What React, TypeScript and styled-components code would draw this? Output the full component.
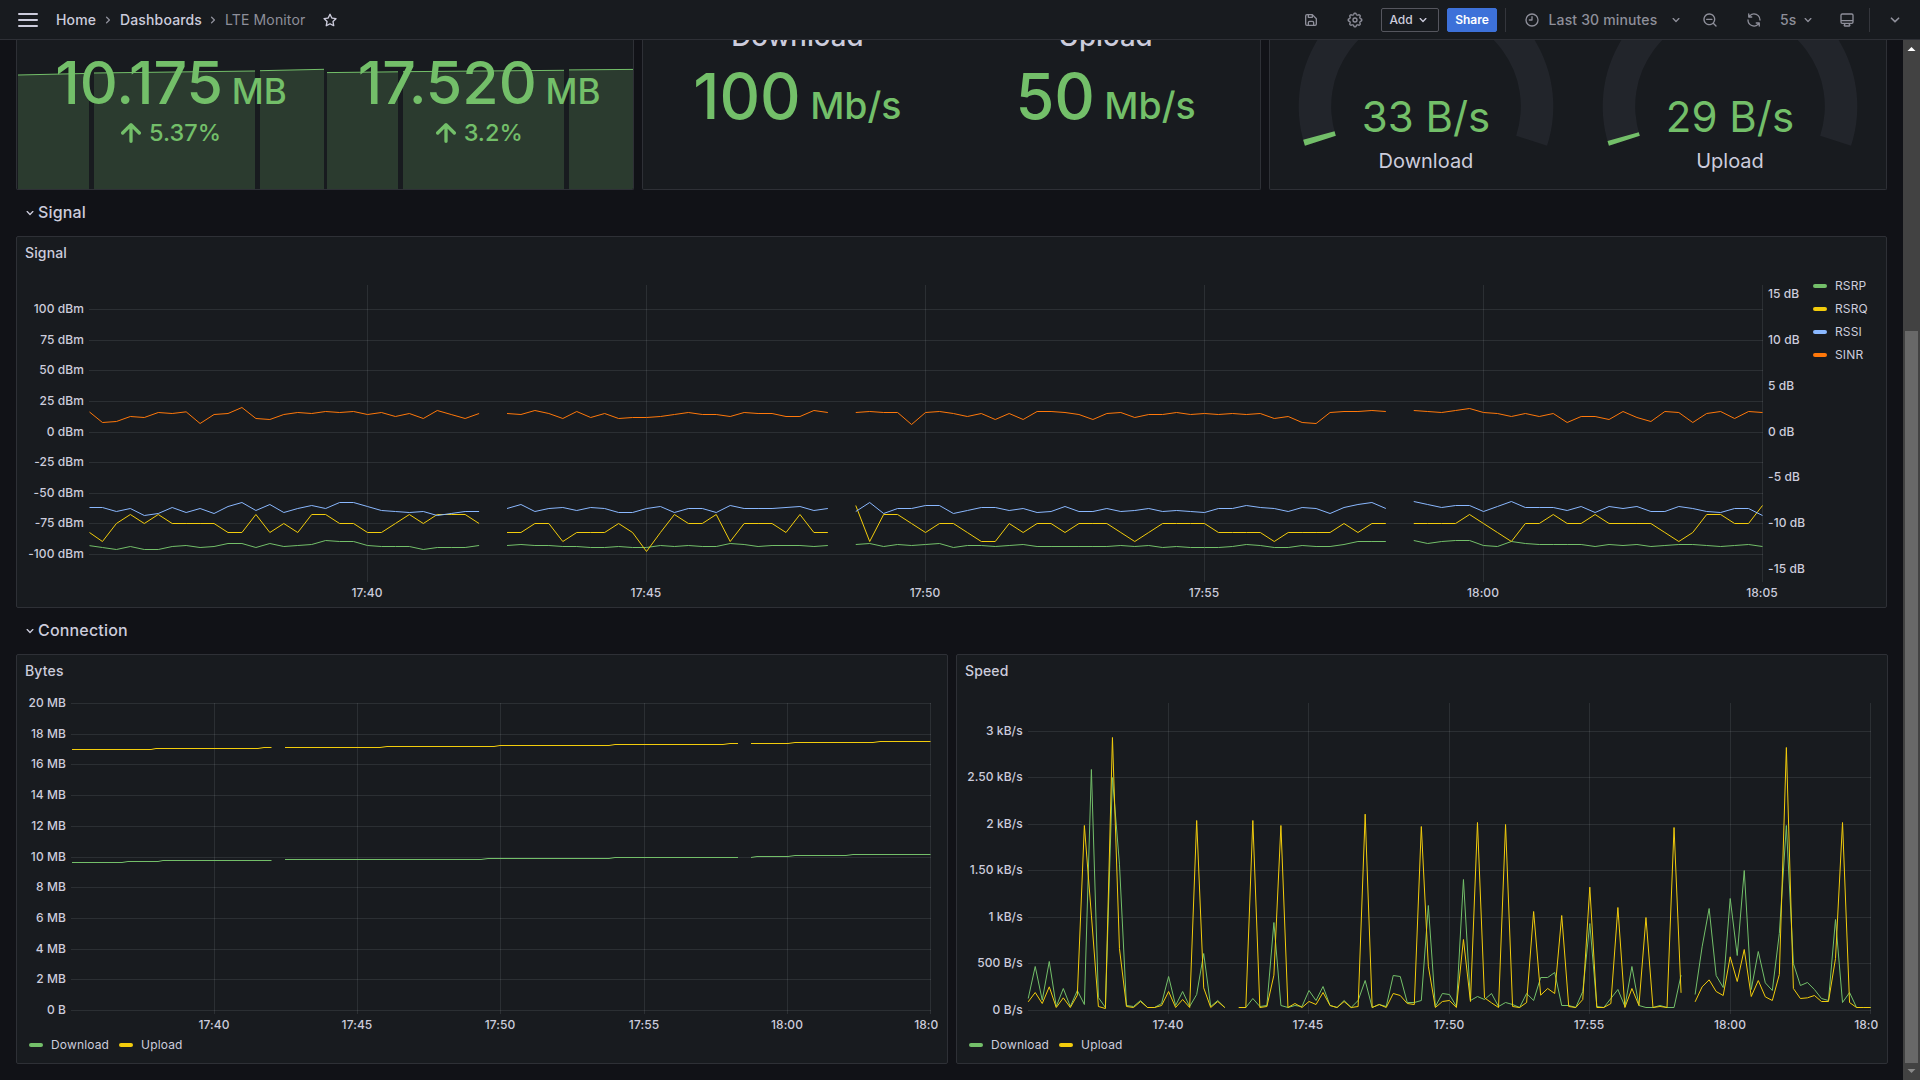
import React from 'react';
import styled, { createGlobalStyle } from 'styled-components';

const color = {
  canvas: '#111217',
  panel: '#181b1f',
  border: '#2e3036',
  text: '#ccccdc',
  muted: '#8e8f9a',
  green: '#73bf69',
  yellow: '#f2cc0c',
  blue: '#8ab8ff',
  orange: '#ff780a',
  grid: 'rgba(240, 250, 255, 0.09)',
};

const GlobalStyle = createGlobalStyle`
  * { box-sizing: border-box; }
  body {
    margin: 0;
    background: ${color.canvas};
    color: ${color.text};
    font-family: Inter, 'Liberation Sans', sans-serif;
    font-size: 14px;
    overflow: hidden;
  }
  svg { display: block; flex: none; }
`;

/* ---------- icons ---------- */

const icons = {
  down: 'M17,9.17a1,1,0,0,0-1.41,0L12,12.71,8.46,9.17a1,1,0,0,0-1.41,0,1,1,0,0,0,0,1.42l4.24,4.24a1,1,0,0,0,1.42,0L17,10.59A1,1,0,0,0,17,9.17Z',
  right: 'M14.83,11.29,10.59,7.05a1,1,0,0,0-1.42,0,1,1,0,0,0,0,1.41L12.71,12,9.17,15.54a1,1,0,0,0,0,1.41,1,1,0,0,0,.71.29,1,1,0,0,0,.71-.29l4.24-4.24A1,1,0,0,0,14.83,11.29Z',
  star: 'M22,9.67A1,1,0,0,0,21.14,9l-5.69-.83L12.9,3a1,1,0,0,0-1.8,0L8.55,8.16,2.86,9a1,1,0,0,0-.81.68,1,1,0,0,0,.25,1l4.13,4-1,5.68A1,1,0,0,0,6.9,21.44L12,18.77l5.1,2.67a.93.93,0,0,0,.46.12,1,1,0,0,0,.59-.19,1,1,0,0,0,.4-1l-1-5.68,4.13-4A1,1,0,0,0,22,9.67Zm-6.15,4a1,1,0,0,0-.29.88l.72,4.2-3.76-2a1.06,1.06,0,0,0-.94,0l-3.76,2,.72-4.2a1,1,0,0,0-.29-.88l-3-3,4.21-.61a1,1,0,0,0,.76-.55L12,5.7l1.88,3.82a1,1,0,0,0,.76.55l4.21.61Z',
  save: 'M20.71,9.29l-6-6a1,1,0,0,0-.32-.21A1.09,1.09,0,0,0,14,3H6A3,3,0,0,0,3,6V18a3,3,0,0,0,3,3H18a3,3,0,0,0,3-3V10A1,1,0,0,0,20.71,9.29ZM9,5h4V7H9Zm6,14H9V16a1,1,0,0,1,1-1h4a1,1,0,0,1,1,1Zm4-1a1,1,0,0,1-1,1H17V16a3,3,0,0,0-3-3H10a3,3,0,0,0-3,3v3H6a1,1,0,0,1-1-1V6A1,1,0,0,1,6,5H7V8A1,1,0,0,0,8,9h6a1,1,0,0,0,1-1V6.41l4,4Z',
  clock: 'M12,2A10,10,0,1,0,22,12,10,10,0,0,0,12,2Zm0,18a8,8,0,1,1,8-8A8,8,0,0,1,12,20ZM12,6a1,1,0,0,0-1,1v4H8a1,1,0,0,0,0,2h4a1,1,0,0,0,1-1V7A1,1,0,0,0,12,6Z',
  zoomOut: 'M21.71,20.29,18,16.61A9,9,0,1,0,16.61,18l3.68,3.68a1,1,0,0,0,1.42,0A1,1,0,0,0,21.71,20.29ZM11,18a7,7,0,1,1,7-7A7,7,0,0,1,11,18Zm4-8H7a1,1,0,0,0,0,2h8a1,1,0,0,0,0-2Z',
  sync: 'M19.91,15.51H15.38a1,1,0,0,0,0,2h2.4A8,8,0,0,1,4,12a1,1,0,0,0-2,0,10,10,0,0,0,16.88,7.23V21a1,1,0,0,0,2,0V16.5A1,1,0,0,0,19.91,15.51ZM12,2A10,10,0,0,0,5.12,4.77V3a1,1,0,0,0-2,0V7.5a1,1,0,0,0,1,1h4.5a1,1,0,0,0,0-2H6.22A8,8,0,0,1,20,12a1,1,0,0,0,2,0A10,10,0,0,0,12,2Z',
  monitor: 'M19,2H5A3,3,0,0,0,2,5V15a3,3,0,0,0,3,3H7.64l-.58,1a2,2,0,0,0,0,2,2,2,0,0,0,1.75,1h6.46A2,2,0,0,0,17,21a2,2,0,0,0,0-2l-.59-1H19a3,3,0,0,0,3-3V5A3,3,0,0,0,19,2ZM8.77,20,10,18H14l1.2,2ZM20,15a1,1,0,0,1-1,1H5a1,1,0,0,1-1-1V14H20Zm0-3H4V5A1,1,0,0,1,5,4H19a1,1,0,0,1,1,1Z',
};

function Icon({ name, size = 16 }: { name: keyof typeof icons; size?: number }) {
  return (
    <svg width={size} height={size} viewBox="0 0 24 24" fill="currentColor">
      <path d={icons[name]} />
    </svg>
  );
}

/* Eight-lobed gear outline, generated around the centre. */
const gearPath = (() => {
  const pts: string[] = [];
  for (let a = 0; a <= 360; a += 3) {
    const t = (a * Math.PI) / 180;
    const wave = Math.cos(8 * t);
    const r = 9.1 + 1.15 * Math.sign(wave) * Math.pow(Math.abs(wave), 0.55);
    pts.push(`${(12 + r * Math.cos(t)).toFixed(2)},${(12 + r * Math.sin(t)).toFixed(2)}`);
  }
  return `M${pts.join('L')}Z`;
})();

function GearIcon() {
  return (
    <svg width="16" height="16" viewBox="0 0 24 24" fill="none" stroke="currentColor" strokeWidth="2">
      <path d={gearPath} strokeLinejoin="round" />
      <circle cx="12" cy="12" r="3" />
    </svg>
  );
}

/* ---------- header ---------- */

const Header = styled.header`
  height: 40px;
  display: flex;
  align-items: center;
  justify-content: space-between;
  padding: 0 15px 0 18px;
  background: ${color.panel};
  border-bottom: 1px solid ${color.border};
`;

const Group = styled.div`
  display: flex;
  align-items: center;
`;

const MenuButton = styled.div`
  width: 20px;
  height: 14px;
  margin-right: 18px;
  display: flex;
  flex-direction: column;
  justify-content: space-between;
  span {
    height: 2px;
    background: ${color.text};
    border-radius: 1px;
  }
`;

const Crumb = styled.span<{ $w: number; $muted?: boolean }>`
  width: ${(p) => p.$w}px;
  white-space: nowrap;
  font-weight: ${(p) => (p.$muted ? 400 : 500)};
  letter-spacing: 0.01071em;
  color: ${(p) => (p.$muted ? color.muted : color.text)};
`;

const CrumbArrow = styled.div`
  margin-right: 4px;
  color: ${color.muted};
`;

const Slot = styled.div<{ $ml?: number; $bright?: boolean }>`
  margin-left: ${(p) => p.$ml ?? 0}px;
  color: ${(p) => (p.$bright ? color.text : color.muted)};
`;

const ToolText = styled.span<{ $ml: number; $w: number }>`
  margin-left: ${(p) => p.$ml}px;
  width: ${(p) => p.$w}px;
  white-space: nowrap;
  font-weight: 500;
  letter-spacing: 0.01071em;
  color: ${color.muted};
`;

const Button = styled.div<{ $primary?: boolean; $w: number; $ml: number }>`
  width: ${(p) => p.$w}px;
  height: 24px;
  margin-left: ${(p) => p.$ml}px;
  display: flex;
  align-items: center;
  justify-content: center;
  gap: 2px;
  border-radius: 2px;
  font-size: 12px;
  font-weight: ${(p) => (p.$primary ? 600 : 500)};
  color: ${(p) => (p.$primary ? '#fff' : color.text)};
  background: ${(p) => (p.$primary ? '#3d71d9' : 'transparent')};
  border: 1px solid ${(p) => (p.$primary ? '#3d71d9' : '#55565e')};
`;

const Divider = styled.div<{ $ml: number }>`
  width: 1px;
  height: 24px;
  margin-left: ${(p) => p.$ml}px;
  background: #34363c;
`;

/* ---------- page ---------- */

const Page = styled.div`
  width: 1920px;
  height: 1080px;
  display: flex;
  flex-direction: column;
  overflow: hidden;
`;

const Body = styled.div`
  flex: 1;
  min-height: 0;
  display: flex;
`;

const Content = styled.main`
  flex: 1;
  min-width: 0;
  padding: 0 16px;
  overflow: hidden;
`;

const StatRow = styled.section`
  height: 150px;
  display: grid;
  grid-template-columns: repeat(3, 1fr);
  column-gap: 8px;
`;

const ConnectionRow = styled.section`
  display: grid;
  grid-template-columns: 932px 932px;
  column-gap: 8px;
  height: 410px;
`;

const Panel = styled.section<{ $h?: number; $cut?: boolean }>`
  position: relative;
  height: ${(p) => (p.$h ? `${p.$h}px` : '100%')};
  background: ${color.panel};
  border: 1px solid ${color.border};
  border-radius: 2px;
  overflow: hidden;
  ${(p) => p.$cut && 'border-top: 0; border-top-left-radius: 0; border-top-right-radius: 0;'}
`;

const PanelTitle = styled.h2`
  margin: 0;
  height: 33px;
  padding: 0 8px;
  line-height: 32px;
  font-size: 14px;
  font-weight: 500;
  letter-spacing: 0.01071em;
`;

const RowTitle = styled.h1`
  margin: 0;
  height: 46px;
  padding: 0 0 3px 6px;
  display: flex;
  align-items: center;
  font-size: 16px;
  font-weight: 500;
  letter-spacing: 0.01071em;
  svg {
    margin-top: 3px;
  }
`;

/* ---------- stat panels ---------- */

const Backdrop = styled.svg`
  position: absolute;
  inset: 0;
`;

const Stats = styled.div`
  position: relative;
  display: grid;
  grid-template-columns: 1fr 1fr;
  height: 100%;
`;

const Stat = styled.div`
  display: flex;
  flex-direction: column;
  align-items: center;
  color: ${color.green};
  font-weight: 500;
  white-space: nowrap;
`;

const StatLabel = styled.div`
  margin: -21px 0 11px;
  font-size: 27.6px;
  line-height: 34px;
  color: ${color.text};
`;

const StatValue = styled.div<{ $size: number; $mt?: number }>`
  margin-top: ${(p) => p.$mt ?? 0}px;
  height: ${(p) => p.$size + 1}px;
  line-height: ${(p) => p.$size + 1}px;
  font-size: ${(p) => p.$size}px;
  small {
    font-size: 0.595em;
    margin-left: 0.25em;
  }
`;

const Change = styled.div`
  margin-top: 5px;
  display: flex;
  align-items: center;
  gap: 8px;
  font-size: 23.5px;
  line-height: 30px;
`;

function ArrowUp() {
  return (
    <svg width="20" height="20" viewBox="6 6 12 12" fill="currentColor">
      <path d="M17.71,11.29l-5-5a1,1,0,0,0-.33-.21,1,1,0,0,0-.76,0,1,1,0,0,0-.33.21l-5,5a1,1,0,0,0,1.42,1.42L11,9.41V17a1,1,0,0,0,2,0V9.41l3.29,3.3a1,1,0,0,0,1.42,0A1,1,0,0,0,17.71,11.29Z" />
    </svg>
  );
}

/* [left, right, y at left, y at right] for every uninterrupted stretch */
const sparks: [number, number, number, number][] = [
  [18, 89, 75, 73.4],
  [94, 255, 73, 71],
  [260, 324, 70.7, 69.3],
  [327, 398, 72.6, 71.8],
  [403, 564, 71.7, 70.3],
  [569, 633, 69.9, 69.4],
];

function Sparklines() {
  return (
    <Backdrop width="616" height="149" viewBox="17 40 616 149">
      {sparks.map(([l, r, a, b]) => (
        <g key={l}>
          <polygon points={`${l},${a} ${r},${b} ${r},189 ${l},189`} fill="#2b3b2f" />
          <line x1={l} y1={a} x2={r} y2={b} stroke={color.green} strokeWidth="1" />
        </g>
      ))}
    </Backdrop>
  );
}

/* ---------- gauges ---------- */

function sector(cx: number, cy: number, r1: number, r2: number, from: number, to: number) {
  const at = (r: number, deg: number) => {
    const t = (deg * Math.PI) / 180;
    return `${(cx - r * Math.cos(t)).toFixed(2)},${(cy - r * Math.sin(t)).toFixed(2)}`;
  };
  const large = to - from > 180 ? 1 : 0;
  return `M${at(r2, from)}A${r2},${r2},0,${large},1,${at(r2, to)}L${at(r1, to)}A${r1},${r1},0,${large},0,${at(r1, from)}Z`;
}

function Gauge({ cx, fill, value, label }: { cx: number; fill: number; value: string; label: string }) {
  return (
    <g textAnchor="middle">
      <path d={sector(cx, 106.4, 94.8, 127.3, -18, 198)} fill="#22252b" />
      <path d={sector(cx, 106.4, 94.8, 127.3, -18, -18 + fill)} fill={color.green} />
      <text x={cx} y="132" fontSize="42" fill={color.green}>{value}</text>
      <text x={cx} y="168" fontSize="20" fill={color.text}>{label}</text>
    </g>
  );
}

/* ---------- charts ---------- */

type Sample = number | null;
type Series = { stroke: string; values: Sample[] };

const _ = null;

/* Samples every 15 s; heights are stored in thirds of a pixel below `base`. */
const signal: Series[] = [
  {
    stroke: color.green,
    values: [946,952,958,949,958,958,949,946,952,949,940,940,952,940,949,946,943,931,934,934,946,949,949,949,958,952,952,952,946,_,
      946,943,946,946,949,949,952,952,949,952,952,946,949,946,949,949,940,943,949,946,946,946,949,946,_,
      943,940,949,943,946,943,940,952,946,946,949,946,943,949,949,949,949,949,949,946,949,946,952,949,952,952,952,949,943,946,952,952,946,949,949,943,934,934,934,_,
      931,940,934,931,931,946,949,934,940,943,943,943,943,949,943,946,943,949,946,943,943,946,949,946,943,949],
  },
  {
    stroke: color.yellow,
    values: [905,934,880,853,880,853,880,880,880,880,907,907,853,907,880,907,853,853,880,880,907,907,880,853,880,853,853,853,880,_,
      907,907,880,880,934,907,907,907,880,907,964,907,853,880,880,853,934,880,880,880,907,853,907,907,_,
      826,934,853,853,880,907,880,880,907,934,934,880,907,880,880,907,880,880,880,907,934,907,880,880,880,880,907,907,907,907,934,907,907,907,907,880,907,880,880,_,
      880,880,880,880,853,880,907,934,880,880,853,880,880,853,880,880,880,880,907,934,907,853,853,880,880,826],
  },
  {
    stroke: color.blue,
    values: [832,832,844,835,856,850,832,847,835,850,829,817,841,823,847,835,826,835,817,817,829,841,844,847,844,856,850,844,844,_,
      835,823,844,835,832,841,832,835,847,847,835,829,847,835,835,847,826,835,835,835,832,829,841,835,_,
      844,817,850,835,835,826,826,850,841,832,832,841,835,847,844,829,844,844,835,844,841,835,844,841,844,847,835,835,826,832,835,844,832,835,850,832,823,817,835,_,
      814,823,832,826,826,844,829,814,832,832,832,841,829,847,829,835,829,844,844,829,835,844,847,835,835,856],
  },
  {
    stroke: color.orange,
    values: [543,577,574,559,562,547,550,545,580,553,550,532,565,568,553,547,550,544,547,544,553,547,559,550,565,541,553,565,550,_,
      550,553,541,550,565,544,562,550,565,562,562,559,553,547,553,553,559,547,550,550,559,559,541,547,_,
      547,544,547,547,583,547,544,550,559,550,568,550,568,544,544,547,553,568,550,547,562,553,553,547,553,550,553,550,553,550,565,559,577,580,547,544,544,541,544,_,
      541,544,547,541,535,547,550,559,550,559,550,577,559,559,568,544,562,574,544,547,577,550,544,565,544,547],
  },
];

const speed: Series[] = [
  {
    stroke: color.green,
    values: [1075,979,1080,964,1099,1045,1099,1051,1093,388,1072,1102,412,672,1096,1099,1081,1102,1102,1090,1009,1096,1054,1099,1063,940,1099,1081,1102,_,
      1102,1102,1075,1099,1096,847,1096,1102,1096,1099,1051,1081,1039,1096,1102,1081,1102,1081,1021,1102,1093,1099,1006,1009,1087,1087,1081,796,1099,1060,1063,1099,718,1081,1069,1078,1060,1099,1087,1093,1102,1060,1081,1012,1012,997,1096,1096,1102,1054,850,1099,1102,1075,1048,1099,979,1096,1102,1102,1096,1102,1102,1005,_,
      1063,920,805,1006,1042,775,946,691,1048,934,1028,1051,880,556,970,1036,1027,1048,1075,1081,838,1087,1057,1102,1102,1102],
  },
  {
    stroke: color.yellow,
    values: [1085,1057,1090,1040,1102,1073,1102,1065,556,825,1099,1105,292,925,1099,1102,1084,1102,1102,1096,1054,1102,1078,1102,541,1043,1102,1084,1102,_,
      1102,1102,541,1102,1099,1005,556,1102,1090,1102,1084,1093,1057,1096,1102,1084,1102,1099,522,1102,1093,1102,1060,1066,1090,1093,559,978,1102,1084,1081,1102,898,1084,547,1073,1088,1102,553,1099,1102,1087,814,1065,1045,1060,826,1099,1102,1078,741,1102,1102,1090,802,1102,1045,1096,832,1102,1099,1102,562,1058,_,
      1085,1040,1019,1054,1066,950,1024,928,1069,1021,1070,1081,1003,322,1045,1075,1073,1066,1084,1084,955,547,1087,1102,1102,1102],
  },
];

const bytes = [
  { stroke: color.green, runs: [
    '72,862.5 122,862.5 128,861.5 158,861.5 163,860.5 271.5,860.5',
    '285,859.5 481,859.5 488,858.5 609,858.5 615,857.5 738,857.5',
    '751,857.5 757,856.5 788,856.5 795,855.5 846,855.5 853,854.5 930.5,854.5',
  ] },
  { stroke: color.yellow, runs: [
    '72,749.5 151,749.5 156,748.5 258,748.5 264,747.5 271.5,747.5',
    '285,747.5 380,747.5 387,746.5 494,746.5 500,745.5 609,745.5 615,744.5 723,744.5 730,743.5 738,743.5',
    '751,743.5 788,743.5 795,742.5 873,742.5 880,741.5 930.5,741.5',
  ] },
];

function trace(values: Sample[], x0: number, step: number, base: number) {
  let d = '';
  let pen = false;
  values.forEach((v, i) => {
    if (v === null) {
      pen = false;
      return;
    }
    d += `${pen ? 'L' : 'M'}${(x0 + i * step).toFixed(2)},${(base + v / 3 + 0.17).toFixed(2)}`;
    pen = true;
  });
  return d;
}

const AxisText = styled.text`
  font-size: 12px;
  font-weight: 450;
  letter-spacing: 0.08px;
  fill: ${color.text};
`;

type Tick = [number, string];

type GridProps = {
  left: number;
  right: number;
  top: number;
  bottom: number;
  labelX: number;
  timeY: number;
  ys: Tick[];
  xs: Tick[];
};

function Grid({ left, right, top, bottom, labelX, timeY, ys, xs }: GridProps) {
  return (
    <g>
      {ys.map(([y, label]) => (
        <g key={label}>
          <rect x={left} y={y} width={right - left} height="1" fill={color.grid} />
          <AxisText x={labelX} y={y + 4} textAnchor="end">{label}</AxisText>
        </g>
      ))}
      {xs.map(([x, label]) => (
        <g key={label}>
          <rect x={x} y={top} width="1" height={bottom - top} fill={color.grid} />
          <AxisText x={x} y={timeY} textAnchor="middle">{label}</AxisText>
        </g>
      ))}
    </g>
  );
}

const ChartRow = styled.div`
  display: flex;
`;

const Legend = styled.div<{ $vertical?: boolean }>`
  display: flex;
  flex-direction: ${(p) => (p.$vertical ? 'column' : 'row')};
  padding: ${(p) => (p.$vertical ? '4px 0 0 6px' : '0 0 0 12px')};
  gap: ${(p) => (p.$vertical ? '0' : '10px')};
`;

const LegendItem = styled.div<{ $h: number }>`
  display: flex;
  align-items: center;
  gap: 8px;
  height: ${(p) => p.$h}px;
  font-size: 12px;
  letter-spacing: 0.0125em;
`;

const Swatch = styled.i<{ $c: string }>`
  width: 14px;
  height: 4px;
  margin-top: 1px;
  border-radius: 2px;
  background: ${(p) => p.$c};
`;

function SignalChart() {
  return (
    <svg width="1790" height="337" viewBox="17 270 1790 337">
      <clipPath id="signal-plot"><rect x="89.5" y="280" width="1673.5" height="310" /></clipPath>
      <Grid
        left={89} right={1763} top={285} bottom={582} labelX={84} timeY={597}
        ys={[[309, '100 dBm'], [340, '75 dBm'], [370, '50 dBm'], [401, '25 dBm'], [432, '0 dBm'], [462, '-25 dBm'], [493, '-50 dBm'], [523, '-75 dBm'], [554, '-100 dBm']]}
        xs={[[367, '17:40'], [646, '17:45'], [925, '17:50'], [1204, '17:55'], [1483, '18:00'], [1762, '18:05']]}
      />
      {([[298, '15 dB'], [344, '10 dB'], [390, '5 dB'], [436, '0 dB'], [481, '-5 dB'], [527, '-10 dB'], [573, '-15 dB']] as Tick[]).map(([y, t]) => (
        <AxisText key={t} x="1768" y={y}>{t}</AxisText>
      ))}
      <g clipPath="url(#signal-plot)" fill="none" strokeWidth="1">
        {signal.map((s) => (
          <path key={s.stroke} d={trace(s.values, 88.5, 13.95, 230)} stroke={s.stroke} />
        ))}
      </g>
    </svg>
  );
}

function BytesChart() {
  const ys = [1010, 979, 949, 918, 887, 857, 826, 795, 764, 734, 703].map(
    (y, i) => [y, i ? `${i * 2} MB` : '0 B'] as Tick,
  );
  return (
    <svg width="921" height="346" viewBox="17 688 921 346">
      <Grid
        left={71} right={931} top={703} bottom={1014} labelX={66} timeY={1029} ys={ys}
        xs={[[214, '17:40'], [357, '17:45'], [500, '17:50'], [644, '17:55'], [787, '18:00'], [930, '18:05']]}
      />
      {bytes.map((s) =>
        s.runs.map((r) => <polyline key={r} points={r} fill="none" stroke={s.stroke} strokeWidth="1" />),
      )}
    </svg>
  );
}

function SpeedChart() {
  return (
    <svg width="921" height="346" viewBox="957 688 921 346">
      <Grid
        left={1028} right={1871} top={703} bottom={1014} labelX={1022.7} timeY={1029}
        ys={[[731, '3 kB/s'], [777, '2.50 kB/s'], [824, '2 kB/s'], [870, '1.50 kB/s'], [917, '1 kB/s'], [963, '500 B/s'], [1010, '0 B/s']]}
        xs={[[1168, '17:40'], [1308, '17:45'], [1449, '17:50'], [1589, '17:55'], [1730, '18:00'], [1870, '18:05']]}
      />
      <g fill="none" strokeWidth="1">
        {speed.map((s) => (
          <path key={s.stroke} d={trace(s.values, 1028.2, 7.02, 640)} stroke={s.stroke} />
        ))}
      </g>
    </svg>
  );
}

function TrafficLegend() {
  return (
    <Legend>
      <LegendItem $h={21}><Swatch $c={color.green} />Download</LegendItem>
      <LegendItem $h={21}><Swatch $c={color.yellow} />Upload</LegendItem>
    </Legend>
  );
}

/* ---------- scrollbar ---------- */

const Scrollbar = styled.div`
  width: 17px;
  display: flex;
  flex-direction: column;
  align-items: center;
  background: #424242;
`;

const ScrollArrow = styled.svg`
  width: 17px;
  height: 17px;
`;

const ScrollThumb = styled.div`
  width: 13px;
  height: 732px;
  margin-top: 274px;
  background: #686868;
`;

/* ---------- app ---------- */

export default function App() {
  return (
    <Page>
      <GlobalStyle />
      <Header>
        <Group>
          <MenuButton><span /><span /><span /></MenuButton>
          <Crumb $w={44}>Home</Crumb>
          <CrumbArrow><Icon name="right" /></CrumbArrow>
          <Crumb $w={85}>Dashboards</Crumb>
          <CrumbArrow><Icon name="right" /></CrumbArrow>
          <Crumb $w={97} $muted>LTE Monitor</Crumb>
          <Slot $bright><Icon name="star" /></Slot>
        </Group>
        <Group>
          <Slot><Icon name="save" /></Slot>
          <Slot $ml={28}><GearIcon /></Slot>
          <Button $w={58} $ml={18}>Add<Icon name="down" /></Button>
          <Button $w={50} $ml={8} $primary>Share</Button>
          <Divider $ml={8} />
          <Slot $ml={18}><Icon name="clock" /></Slot>
          <ToolText $ml={8.5} $w={119.5}>Last 30 minutes</ToolText>
          <Slot><Icon name="down" /></Slot>
          <Slot $ml={18}><Icon name="zoomOut" /></Slot>
          <Slot $ml={28}><Icon name="sync" /></Slot>
          <ToolText $ml={18} $w={20}>5s</ToolText>
          <Slot><Icon name="down" /></Slot>
          <Slot $ml={23}><Icon name="monitor" /></Slot>
          <Divider $ml={14} />
          <Slot $ml={15}><Icon name="down" size={20} /></Slot>
        </Group>
      </Header>
      <Body>
        <Content>
          <StatRow>
            <Panel $cut>
              <Sparklines />
              <Stats>
                <Stat>
                  <StatValue $size={59} $mt={13}>10.175<small>MB</small></StatValue>
                  <Change><ArrowUp />5.37%</Change>
                </Stat>
                <Stat>
                  <StatValue $size={59} $mt={13}>17.520<small>MB</small></StatValue>
                  <Change><ArrowUp />3.2%</Change>
                </Stat>
              </Stats>
            </Panel>
            <Panel $cut>
              <Stats>
                <Stat>
                  <StatLabel>Download</StatLabel>
                  <StatValue $size={63}>100<small>Mb/s</small></StatValue>
                </Stat>
                <Stat>
                  <StatLabel>Upload</StatLabel>
                  <StatValue $size={63}>50<small>Mb/s</small></StatValue>
                </Stat>
              </Stats>
            </Panel>
            <Panel $cut>
              <svg width="616" height="149" viewBox="1270 40 616 149">
                <Gauge cx={1426} fill={2.8} value="33 B/s" label="Download" />
                <Gauge cx={1730} fill={2.2} value="29 B/s" label="Upload" />
              </svg>
            </Panel>
          </StatRow>
          <RowTitle><Icon name="down" />Signal</RowTitle>
          <Panel $h={372}>
            <PanelTitle>Signal</PanelTitle>
            <ChartRow>
              <SignalChart />
              <Legend $vertical>
                <LegendItem $h={23}><Swatch $c={color.green} />RSRP</LegendItem>
                <LegendItem $h={23}><Swatch $c={color.yellow} />RSRQ</LegendItem>
                <LegendItem $h={23}><Swatch $c={color.blue} />RSSI</LegendItem>
                <LegendItem $h={23}><Swatch $c={color.orange} />SINR</LegendItem>
              </Legend>
            </ChartRow>
          </Panel>
          <RowTitle><Icon name="down" />Connection</RowTitle>
          <ConnectionRow>
            <Panel>
              <PanelTitle>Bytes</PanelTitle>
              <BytesChart />
              <TrafficLegend />
            </Panel>
            <Panel>
              <PanelTitle>Speed</PanelTitle>
              <SpeedChart />
              <TrafficLegend />
            </Panel>
          </ConnectionRow>
        </Content>
        <Scrollbar>
          <ScrollArrow viewBox="0 0 17 17"><path d="M8.5 7L12.5 11H4.5Z" fill="#fff" /></ScrollArrow>
          <ScrollThumb />
          <ScrollArrow viewBox="0 0 17 17"><path d="M8.5 10L12.5 6H4.5Z" fill="#8a8a8a" /></ScrollArrow>
        </Scrollbar>
      </Body>
    </Page>
  );
}
